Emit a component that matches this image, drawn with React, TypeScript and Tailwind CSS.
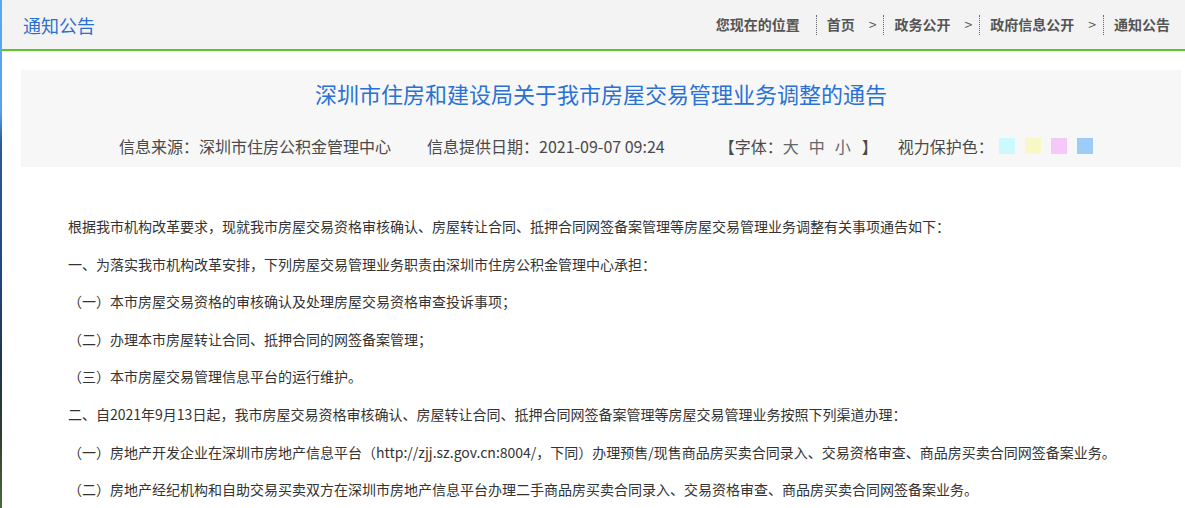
const FONT = "font-['Noto_Sans_CJK_SC','Noto_Sans',sans-serif]";

const crumbs = ["首页", "政务公开", "政府信息公开", "通知公告"];

const paragraphs = [
  "根据我市机构改革要求，现就我市房屋交易资格审核确认、房屋转让合同、抵押合同网签备案管理等房屋交易管理业务调整有关事项通告如下：",
  "一、为落实我市机构改革安排，下列房屋交易管理业务职责由深圳市住房公积金管理中心承担：",
  "（一）本市房屋交易资格的审核确认及处理房屋交易资格审查投诉事项；",
  "（二）办理本市房屋转让合同、抵押合同的网签备案管理；",
  "（三）本市房屋交易管理信息平台的运行维护。",
  "二、自2021年9月13日起，我市房屋交易资格审核确认、房屋转让合同、抵押合同网签备案管理等房屋交易管理业务按照下列渠道办理：",
  "（一）房地产开发企业在深圳市房地产信息平台（http://zjj.sz.gov.cn:8004/，下同）办理预售/现售商品房买卖合同录入、交易资格审查、商品房买卖合同网签备案业务。",
  "（二）房地产经纪机构和自助交易买卖双方在深圳市房地产信息平台办理二手商品房买卖合同录入、交易资格审查、商品房买卖合同网签备案业务。",
];

// eye-care background swatches
const swatches = ["bg-[#ccf9fb]", "bg-[#f8f8c6]", "bg-[#f4c9f9]", "bg-[#9ccdf9]"];

function Breadcrumb() {
  return (
    <div className="flex items-center text-[14px] font-bold text-[#555]">
      <span className="pr-[16px]">您现在的位置</span>
      {crumbs.map((c, i) => (
        <div
          key={c}
          className="flex h-[20px] items-center border-l border-dotted border-[#666] pl-[10px]"
        >
          <span>{c}</span>
          {i < crumbs.length - 1 ? (
            <span className="ml-[14px] mr-[7px] font-normal">&gt;</span>
          ) : (
            <span className="w-[15px]" />
          )}
        </div>
      ))}
    </div>
  );
}

function Meta() {
  return (
    <div className="mt-[30px] flex items-center pl-[98px] text-[16px] leading-[20px] text-[#4a4a4a]">
      <span>信息来源：深圳市住房公积金管理中心</span>
      <span className="ml-[36px]">信息提供日期：2021-09-07 09:24</span>
      <span className="ml-[54px]">【字体：</span>
      <span className="flex gap-[10px] text-[#666]">
        <span>大</span>
        <span>中</span>
        <span>小</span>
      </span>
      <span className="ml-[11px]">】</span>
      <span className="ml-[20px]">视力保护色：</span>
      <span className="ml-[5px] flex gap-[10px]">
        {swatches.map((s) => (
          <span key={s} className={`block h-[16px] w-[16px] ${s}`} />
        ))}
      </span>
    </div>
  );
}

export default function App() {
  return (
    <div className={`flex h-[508px] w-[1185px] overflow-hidden bg-white ${FONT}`}>
      <div className="w-[2px] shrink-0 bg-[linear-gradient(to_bottom,#5aaaf0_0%,#55a2ea_22%,#2f5a95_28%,#22457a_55%,#1e3550_72%,#2e3d2c_85%,#4d6a3d_100%)]" />
      <div className="min-w-0 flex-1">
        <header className="flex h-[51px] items-center justify-between border-b-2 border-[#5dc42c] bg-[#f3f3f3] pl-[21px]">
          <h1 className="text-[18px] leading-none text-[#2a6fd2]">通知公告</h1>
          <Breadcrumb />
        </header>

        <section className="mt-[19px] ml-[19px] mr-[4px] h-[97px] bg-[#f7f7f7] pt-[10px]">
          <h2 className="text-center text-[22px] leading-[26px] text-[#2a71d6]">
            深圳市住房和建设局关于我市房屋交易管理业务调整的通告
          </h2>
          <Meta />
        </section>

        <article className="pt-[41px] pl-[66px] pr-[20px] text-[14px] leading-[37.6px] text-[#333]">
          {paragraphs.map((p) => (
            <p key={p} className="whitespace-nowrap">
              {p}
            </p>
          ))}
        </article>
      </div>
    </div>
  );
}
